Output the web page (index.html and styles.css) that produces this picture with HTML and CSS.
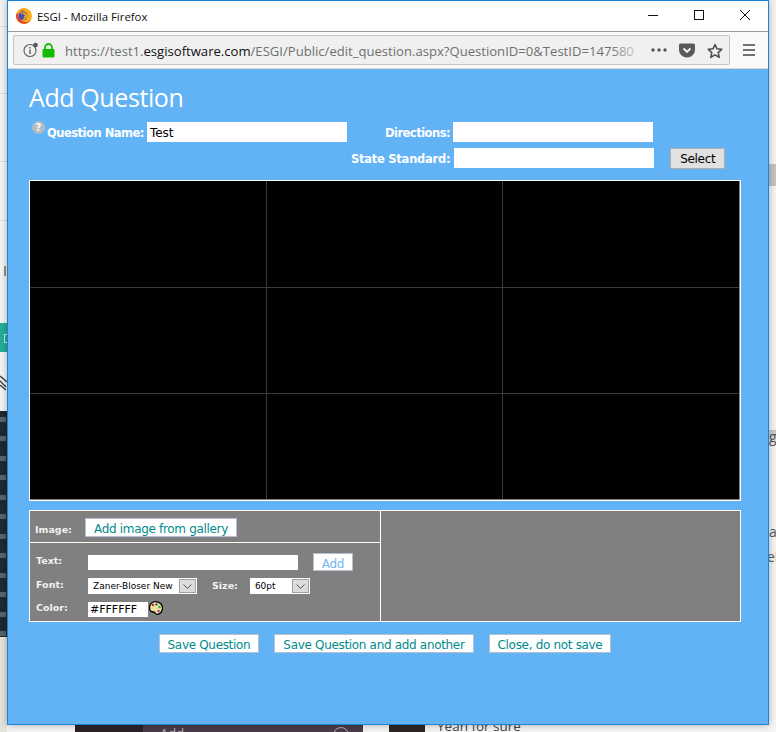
FILE: index.html
```html
<!DOCTYPE html>
<html>

<head>
    <title>ESGI - Mozilla Firefox</title>
    <link rel="stylesheet" href="styles.css">
</head>

<body>
    <div class="desktop">
        <div class="bg-line bg-line-1"></div>
        <div class="bg-line bg-line-2"></div>
        <div class="bg-line bg-line-3"></div>
        <div class="bg-line bg-line-4"></div>
        <div class="bg-tick"></div>
        <div class="bg-teal"><i></i></div>
        <svg class="bg-clip" width="7" height="16" viewBox="0 0 7 16">
            <path d="M0 1l7 6M-1 5l7 7M0 10l6 5" fill="none" stroke="#444" stroke-width="1.500" />
        </svg>
        <div class="bg-code"></div>
        <div class="bg-thumb"></div>
        <div class="bg-tab"></div>
        <div class="bg-band"></div>
        <div class="bg-word bg-word-g">g</div>
        <div class="bg-word bg-word-a">a</div>
        <div class="bg-word bg-word-el">el</div>
        <div class="bg-dark"></div>
        <div class="bg-purple"><span>Add</span><i></i></div>
        <div class="bg-avatar"></div>
        <div class="bg-yeah">Yeah for sure</div>

        <div class="window">
            <div class="titlebar">
                <svg class="ff-logo" width="16" height="16" viewBox="0 0 16 16">
                    <circle cx="8" cy="8" r="8" fill="#fbb21e" />
                    <path d="M0.300 6a8 8 0 0 0 15.200 4.800a7 7 0 0 1 -8.500 2.700a6.500 6.500 0 0 1 -4.500 -8.500z" fill="#ea3a2e" />
                    <path d="M3 3.500a7 7 0 0 1 7 -1.500a5 5 0 0 0 -3 1z" fill="#f4682a" />
                    <circle cx="7" cy="8" r="4.500" fill="#3d4fb8" />
                    <path d="M4.500 4.500h4.500l2.500 2.500l-0.500 3l-3 2.500l-2.500 -0.500l3 -2l-1 -1.500l1.500 -1l-2 -1.500h-2z" fill="#f79a1e" />
                </svg>
                <span class="title-text">ESGI - Mozilla Firefox</span>
                <div class="win-controls">
                    <svg width="10" height="10" viewBox="0 0 10 10">
                        <path d="M0 5.500h10" stroke="#111" fill="none" />
                    </svg>
                    <svg width="10" height="10" viewBox="0 0 10 10">
                        <rect x="0.500" y="0.500" width="9" height="9" stroke="#111" fill="none" />
                    </svg>
                    <svg width="10" height="10" viewBox="0 0 10 10">
                        <path d="M0 0l10 10M10 0l-10 10" stroke="#111" fill="none" />
                    </svg>
                </div>
            </div>
            <div class="toolbar">
                <div class="urlbar">
                    <svg class="info-icon" width="16" height="16" viewBox="0 0 16 16">
                        <circle cx="7" cy="8.500" r="6" fill="none" stroke="#666" stroke-width="1.200" />
                        <path d="M7 7.500v4.500M7 5v1.500" stroke="#666" stroke-width="1.500" />
                        <circle cx="12.500" cy="3" r="2.300" fill="#555" />
                    </svg>
                    <svg class="lock-icon" width="13" height="15" viewBox="0 0 13 15">
                        <path d="M3 7V4.500a3.500 3.500 0 0 1 7 0V7" fill="none" stroke="#12bc00" stroke-width="1.800" />
                        <rect x="0.500" y="6" width="12" height="8.500" rx="1" fill="#12bc00" />
                    </svg>
                    <div class="url"><span>https://test1.</span><b>esgisoftware.com</b><span>/ESGI/Public/edit_question.aspx?QuestionID=0&amp;TestID=147580</span></div>
                    <div class="url-fade"></div>
                    <svg class="dots-icon" width="16" height="4" viewBox="0 0 16 4">
                        <circle cx="2" cy="2" r="1.700" fill="#555" />
                        <circle cx="8" cy="2" r="1.700" fill="#555" />
                        <circle cx="14" cy="2" r="1.700" fill="#555" />
                    </svg>
                    <svg class="pocket-icon" width="16" height="15" viewBox="0 0 16 15">
                        <path d="M1.500 0.500h13a1.500 1.500 0 0 1 1.500 1.500v5a8 7.500 0 0 1 -16 0v-5a1.500 1.500 0 0 1 1.500 -1.500z" fill="#595959" />
                        <path d="M4.500 5.500l3.500 3.300l3.500 -3.300" fill="none" stroke="#f0f0f0" stroke-width="2" />
                    </svg>
                    <svg class="star-icon" width="16" height="16" viewBox="0 0 16 16">
                        <path d="M8 1.500l2 4.300l4.700 0.600l-3.500 3.200l1 4.700l-4.200 -2.400l-4.200 2.400l1 -4.700l-3.500 -3.200l4.700 -0.600z" fill="none" stroke="#4f4f4f" stroke-width="1.600" stroke-linejoin="round" />
                    </svg>
                </div>
                <svg class="menu-icon" width="12" height="12" viewBox="0 0 12 12">
                    <path d="M0 1h12M0 6h12M0 11h12" stroke="#444" stroke-width="1.600" />
                </svg>
            </div>

            <div class="content">
                <h1>Add Question</h1>

                <div class="fields">
                    <div class="field-row">
                        <svg class="help-icon" width="13" height="13" viewBox="0 0 13 13">
                            <circle cx="6.500" cy="6.500" r="6.500" fill="#b5bcc4" />
                            <text x="6.500" y="10" text-anchor="middle" class="help-mark">?</text>
                        </svg>
                        <label class="label-name">Question Name:</label>
                        <input class="field" type="text" value="Test">
                        <label class="label-dir">Directions:</label>
                        <input class="field" type="text">
                    </div>
                    <div class="field-row field-row-2">
                        <label class="label-state">State Standard:</label>
                        <input class="field" type="text">
                        <button class="btn-select" type="button">Select</button>
                    </div>
                </div>

                <div class="canvas">
                    <div class="cell"></div>
                    <div class="cell"></div>
                    <div class="cell"></div>
                    <div class="cell"></div>
                    <div class="cell"></div>
                    <div class="cell"></div>
                    <div class="cell"></div>
                    <div class="cell"></div>
                    <div class="cell"></div>
                </div>

                <div class="tools">
                    <div class="tools-left">
                        <div class="image-row">
                            <span class="small-label image-label">Image:</span>
                            <button class="btn" type="button">Add image from gallery</button>
                        </div>
                        <div class="text-rows">
                            <div class="tool-row">
                                <span class="small-label">Text:</span>
                                <input class="text-input" type="text">
                                <button class="btn btn-add" type="button">Add</button>
                            </div>
                            <div class="tool-row tool-row-font">
                                <span class="small-label">Font:</span>
                                <div class="fake-select select-font"><span>Zaner-Bloser New</span><i class="arrow"><svg width="9" height="5" viewBox="0 0 9 5"><path d="M0.500 0.500l4 4l4 -4" fill="none" stroke="#555" /></svg></i></div>
                                <span class="small-label size-label">Size:</span>
                                <div class="fake-select select-size"><span>60pt</span><i class="arrow"><svg width="9" height="5" viewBox="0 0 9 5"><path d="M0.500 0.500l4 4l4 -4" fill="none" stroke="#555" /></svg></i></div>
                            </div>
                            <div class="tool-row tool-row-color">
                                <span class="small-label">Color:</span>
                                <input class="color-input" type="text" value="#FFFFFF">
                                <svg class="palette" width="14" height="14" viewBox="0 0 14 14">
                                    <path d="M6.500 0.700c4 0 7 2.800 7 6.300s-2.500 6.300 -5.500 6.300c-2 0 -1.500 -2.300 -3.500 -2.300c-1.500 0 -4 -0.700 -4 -4.500c0 -3.300 3 -5.800 6 -5.800z" fill="#f0e49a" stroke="#000" stroke-width="1.300" />
                                    <circle cx="4" cy="4" r="1.200" fill="#c22" />
                                    <circle cx="7.500" cy="3.500" r="1.200" fill="#26a" />
                                    <circle cx="10.500" cy="6" r="1.200" fill="#2a4" />
                                    <circle cx="9.500" cy="10" r="1.200" fill="#a2a" />
                                </svg>
                            </div>
                        </div>
                    </div>
                    <div class="tools-right"></div>
                </div>

                <div class="actions">
                    <button class="btn" type="button">Save Question</button>
                    <button class="btn" type="button">Save Question and add another</button>
                    <button class="btn" type="button">Close, do not save</button>
                </div>
            </div>
        </div>
    </div>
</body>

</html>
```

FILE: styles.css
```css
html,
body {
    margin: 0;
    padding: 0;
}

body {
    width: 776px;
    height: 732px;
    overflow: hidden;
    font-family: 'DejaVu Sans', Verdana, sans-serif;
}

.desktop {
    position: relative;
    width: 776px;
    height: 732px;
    overflow: hidden;
    background: #f4f4f4;
}

/* scraps of the page behind the window */
.bg-line {
    position: absolute;
    left: 0;
    width: 7px;
    height: 1px;
    background: #dcdcdc;
}

.bg-line-1 { top: 26px; }
.bg-line-2 { top: 93px; }
.bg-line-3 { top: 161px; }
.bg-line-4 { top: 220px; }

.bg-tick {
    position: absolute;
    left: 4px;
    top: 266px;
    width: 2px;
    height: 10px;
    background: #a88b70;
}

.bg-teal {
    position: absolute;
    left: 0;
    top: 323px;
    width: 7px;
    height: 29px;
    background: #25ae95;
}

.bg-teal i {
    position: absolute;
    left: 4px;
    top: 11px;
    width: 4px;
    height: 7px;
    border: 1px solid #cfeee8;
}

.bg-clip {
    position: absolute;
    left: 0;
    top: 375px;
}

.bg-code {
    position: absolute;
    left: 0;
    top: 411px;
    width: 7px;
    height: 226px;
    background-color: #1e2a30;
    background-image: repeating-linear-gradient(to bottom, transparent 0, transparent 6px, #59636a 6px, #59636a 11px, transparent 11px, transparent 19.500px);
    background-size: 6px 100%;
    background-repeat: no-repeat;
}

.bg-thumb {
    position: absolute;
    left: 0;
    top: 637px;
    width: 7px;
    height: 95px;
    background: #e6e2de;
}

.bg-tab {
    position: absolute;
    left: 769px;
    top: 164px;
    width: 7px;
    height: 22px;
    background: #c2c2c2;
}

.bg-band {
    position: absolute;
    left: 769px;
    top: 430px;
    width: 7px;
    height: 14px;
    background: linear-gradient(to bottom, #c4c4c4, #ececec);
}

.bg-word {
    position: absolute;
    left: 769px;
    font-family: 'Open Sans', sans-serif;
    font-size: 14px;
    line-height: 16px;
    color: #555;
    white-space: nowrap;
}

.bg-word-g { top: 429px; }
.bg-word-a { top: 524px; }
.bg-word-el { left: 767px; top: 549px; }

.bg-dark {
    position: absolute;
    left: 75px;
    top: 724px;
    width: 68px;
    height: 8px;
    background: #2b2228;
}

.bg-purple {
    position: absolute;
    left: 143px;
    top: 724px;
    width: 220px;
    height: 8px;
    overflow: hidden;
    background: #4a3c48;
}

.bg-purple span {
    position: absolute;
    left: 17px;
    top: 1px;
    font-family: 'Open Sans', sans-serif;
    font-size: 13px;
    line-height: 16px;
    color: #b8aeb6;
}

.bg-purple i {
    position: absolute;
    left: 190px;
    top: 3px;
    width: 14px;
    height: 14px;
    border: 1px solid #b8aeb6;
    border-radius: 50%;
}

.bg-avatar {
    position: absolute;
    left: 389px;
    top: 722px;
    width: 36px;
    height: 10px;
    background: #2e2624;
}

.bg-yeah {
    position: absolute;
    left: 437px;
    top: 717px;
    font-family: 'Open Sans', sans-serif;
    font-size: 13.500px;
    line-height: 18px;
    color: #444;
}

/* browser window */
.window {
    position: absolute;
    left: 7px;
    top: 0;
    box-sizing: border-box;
    width: 762px;
    height: 725px;
    border: 1px solid #1a85d8;
    display: flex;
    flex-direction: column;
    box-shadow: 0 0 7px rgba(0, 0, 0, 0.3);
}

.titlebar {
    height: 31px;
    box-sizing: border-box;
    padding-left: 8px;
    background: #fff;
    border-bottom: 1px solid #9a9a9a;
    display: flex;
    align-items: center;
}

.ff-logo {
    margin-right: 5px;
    margin-top: -1px;
}

.title-text {
    font-family: 'Open Sans', sans-serif;
    font-size: 11.400px;
    color: #111;
}

.win-controls {
    margin-left: auto;
    display: flex;
    gap: 36px;
    padding-right: 18px;
    margin-top: -2px;
}

.toolbar {
    height: 37px;
    box-sizing: border-box;
    background: #f9f9f9;
    border-bottom: 1px solid #d6d6d6;
    padding: 3px 0 0 5px;
    display: flex;
    align-items: flex-start;
}

.urlbar {
    position: relative;
    box-sizing: border-box;
    width: 717px;
    height: 30px;
    background: #f0f0f0;
    border: 1px solid #c4c4c4;
    border-radius: 2px;
    display: flex;
    align-items: center;
    overflow: hidden;
}

.info-icon {
    margin-left: 9px;
    margin-top: -1px;
    flex: none;
}

.lock-icon {
    margin-left: 3px;
    flex: none;
}

.url {
    margin-left: 10px;
    width: 590px;
    flex: none;
    overflow: hidden;
    white-space: nowrap;
    font-family: 'Open Sans', sans-serif;
    font-size: 13.100px;
    color: #6f6f6f;
    margin-top: 1px;
}

.url b {
    font-weight: normal;
    color: #111;
}

.url-fade {
    position: absolute;
    left: 596px;
    top: 0;
    width: 36px;
    height: 28px;
    background: linear-gradient(to right, rgba(240, 240, 240, 0), #f0f0f0);
}

.dots-icon {
    position: absolute;
    left: 637px;
    top: 12px;
}

.pocket-icon {
    position: absolute;
    left: 665px;
    top: 7px;
}

.star-icon {
    position: absolute;
    left: 693px;
    top: 7px;
}

.menu-icon {
    margin-left: 13px;
    margin-top: 9px;
}

/* dialog content */
.content {
    flex: 1;
    background: #62b2f6;
    padding: 0 0 0 21px;
    font-family: 'DejaVu Sans', Verdana, sans-serif;
}

h1 {
    margin: 0;
    padding-top: 11px;
    font-family: 'Open Sans', sans-serif;
    font-weight: normal;
    font-size: 25px;
    letter-spacing: -0.400px;
    line-height: 34px;
    color: #fff;
}

.fields {
    height: 58px;
    margin-top: 8px;
}

.field-row {
    display: flex;
    align-items: center;
    height: 20px;
    position: relative;
    padding-left: 18px;
}

.field-row-2 {
    margin-top: 6px;
    padding-left: 322px;
}

.help-icon {
    position: absolute;
    left: 3px;
    top: -1px;
}

.help-mark {
    font-family: 'DejaVu Sans', sans-serif;
    font-size: 10px;
    font-weight: bold;
    fill: #fff;
}

.field-row label {
    font-size: 11.500px;
    font-weight: bold;
    color: #fff;
    white-space: nowrap;
    letter-spacing: -0.500px;
    padding-top: 1px;
}

.label-name { margin-right: 3px; }
.label-dir { margin-left: 38px; margin-right: 3px; }
.field-row .label-state { margin-right: 4px; letter-spacing: -0.250px; }

.field {
    box-sizing: border-box;
    width: 200px;
    height: 20px;
    border: 0;
    padding: 1px 3px 0;
    background: #fff;
    font-family: 'DejaVu Sans', sans-serif;
    font-size: 12px;
    color: #000;
    border-radius: 0;
    outline: 0;
}

.btn-select {
    margin-left: 16px;
    box-sizing: border-box;
    width: 55px;
    height: 21px;
    padding: 1px 0 0;
    border: 1px solid #adadad;
    background: #e1e1e1;
    font-family: 'DejaVu Sans', sans-serif;
    font-size: 12px;
    letter-spacing: -0.300px;
    color: #000;
}

.canvas {
    box-sizing: border-box;
    width: 712px;
    height: 321px;
    border: 1px solid #fff;
    padding: 0 1px 1px 0;
    background: #808080;
    display: grid;
    grid-template-columns: 237px 236px 1fr;
    grid-template-rows: 107px 106px 1fr;
}

.cell {
    background: #000;
    border-right: 1px solid #3a3a3a;
    border-bottom: 1px solid #3a3a3a;
}

.cell:nth-child(3n) { border-right: 0; }
.cell:nth-child(n+7) { border-bottom: 0; }

.tools {
    box-sizing: border-box;
    width: 712px;
    height: 112px;
    margin-top: 9px;
    border: 1px solid #fff;
    background: #808080;
    display: flex;
}

.tools-left {
    box-sizing: border-box;
    width: 351px;
    border-right: 1px solid #fff;
}

.tools-right {
    flex: 1;
}

.image-row {
    box-sizing: border-box;
    height: 32px;
    border-bottom: 1px solid #fff;
    padding: 7px 0 0 5px;
    display: flex;
    align-items: flex-start;
}

.image-label {
    width: 50px;
    margin-top: 6px;
}

.small-label {
    font-family: 'DejaVu Sans', sans-serif;
    font-size: 9.500px;
    font-weight: bold;
    color: #f2f2f2;
    line-height: 12px;
}

.btn {
    box-sizing: border-box;
    height: 19px;
    padding: 2px 8px 0;
    border: 1px solid #b4bfd0;
    border-radius: 0;
    background: #fff;
    font-family: 'DejaVu Sans', sans-serif;
    font-size: 12px;
    letter-spacing: -0.320px;
    line-height: 16px;
    color: #008b8b;
}

.text-rows {
    padding: 12px 0 0 6px;
}

.tool-row {
    display: flex;
    align-items: flex-start;
}

.tool-row .small-label:first-child {
    width: 52px;
    flex: none;
}

.text-input {
    box-sizing: border-box;
    width: 210px;
    height: 15px;
    border: 0;
    padding: 0;
    background: #fff;
    outline: 0;
    border-radius: 0;
}

.btn-add {
    margin-left: 15px;
    margin-top: -2px;
    height: 18px;
    width: 40px;
    padding: 2px 0 0;
    color: #72b6f2;
}

.tool-row-font {
    margin-top: 8px;
}

.fake-select {
    box-sizing: border-box;
    height: 16px;
    background: #fff;
    display: flex;
    align-items: center;
    justify-content: space-between;
    padding-left: 5px;
    font-family: 'DejaVu Sans', sans-serif;
    font-size: 9px;
    color: #000;
    white-space: nowrap;
}

.select-font { width: 109px; margin-top: -1px; }
.select-size { width: 60px; margin-top: -1px; }

.arrow {
    box-sizing: border-box;
    width: 17px;
    height: 14px;
    margin-right: 1px;
    background: #dcdcdc;
    border: 1px solid #a0a0a0;
    display: flex;
    align-items: center;
    justify-content: center;
}

.size-label {
    margin: 1px 12px 0 15px;
}

.tool-row-color {
    margin-top: 8px;
}

.color-input {
    box-sizing: border-box;
    width: 60px;
    height: 15px;
    border: 0;
    padding: 0 2px;
    background: #fff;
    font-family: 'DejaVu Sans', sans-serif;
    font-size: 11px;
    color: #000;
    outline: 0;
    border-radius: 0;
}

.palette {
    margin: -1px 0 0 1px;
}

.actions {
    width: 712px;
    margin-top: 12px;
    display: flex;
    justify-content: center;
    gap: 15px;
}
```
